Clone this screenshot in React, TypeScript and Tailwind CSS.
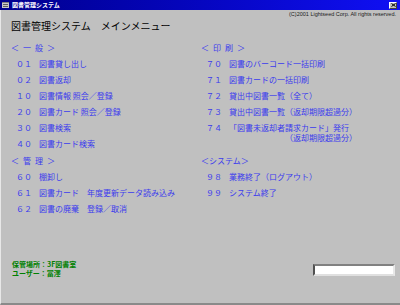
const blue = 'text-[#3a3aee]'

type Item = { no: string; label: string; sub?: string }

const general: Item[] = [
  { no: '０１', label: '図書貸し出し' },
  { no: '０２', label: '図書返却' },
  { no: '１０', label: '図書情報 照会／登録' },
  { no: '２０', label: '図書カード 照会／登録' },
  { no: '３０', label: '図書検索' },
  { no: '４０', label: '図書カード検索' },
]

const manage: Item[] = [
  { no: '６０', label: '棚卸し' },
  { no: '６１', label: '図書カード　年度更新データ読み込み' },
  { no: '６２', label: '図書の廃棄　登録／取消' },
]

const print: Item[] = [
  { no: '７０', label: '図書のバーコード一括印刷' },
  { no: '７１', label: '図書カードの一括印刷' },
  { no: '７２', label: '貸出中図書一覧（全て）' },
  { no: '７３', label: '貸出中図書一覧（返却期限超過分）' },
  { no: '７４', label: '「図書未返却者請求カード」発行', sub: '（返却期限超過分）' },
]

const system: Item[] = [
  { no: '９８', label: '業務終了（ログアウト）' },
  { no: '９９', label: 'システム終了' },
]

function Header({ text, spaced }: { text: string; spaced?: boolean }) {
  return <div className={`h-[17px] flex items-center leading-none whitespace-nowrap ${blue} ${spaced ? 'tracking-[4px]' : ''}`}>{text}</div>
}

function Row({ item }: { item: Item }) {
  if (item.sub) {
    return <div className={`h-8 ${blue}`}>
      <div className="h-4 flex items-center pl-[5px] leading-none">
        <span className="w-[23px] shrink-0">{item.no}</span>
        <span className="whitespace-nowrap">{item.label}</span>
      </div>
      <div className="mt-[-2px] pl-[84px] leading-none whitespace-nowrap">{item.sub}</div>
    </div>
  }
  return <div className={`h-4 flex items-center pl-[5px] leading-none ${blue}`}>
    <span className="w-[23px] shrink-0">{item.no}</span>
    <span className="whitespace-nowrap">{item.label}</span>
  </div>
}

export default function App() {
  return <div className="w-[400px] h-[305px] bg-[#c0c0c0] flex flex-col overflow-hidden font-['Noto_Sans_CJK_JP',sans-serif]">
    {/* title bar */}
    <div className="h-[10px] shrink-0 flex items-center bg-gradient-to-r from-[#00008e] to-[#1010f4] pl-[2px] pr-[3px]">
      <div className="w-[7px] h-[6px] bg-[#c8c8c8] border-t border-[#808080] flex flex-col justify-center gap-[1px] px-[1px]">
        <div className="h-px bg-[#606060]" />
        <div className="h-px bg-[#606060]" />
      </div>
      <span className="ml-[3px] text-[6px] font-bold text-white leading-none whitespace-nowrap">図書管理システム</span>
      <div className="ml-auto w-[8px] h-[7px] bg-[#c0c0c0] border border-t-white border-l-white border-r-[#404040] border-b-[#404040] flex items-center justify-center">
        <svg width="5" height="4" viewBox="0 0 5 4"><path d="M0.5 0.5 L4.5 3.5 M4.5 0.5 L0.5 3.5" stroke="#000" strokeWidth="1" /></svg>
      </div>
    </div>

    <div className="flex-1 flex flex-col border-l border-l-[#e8e8e8] border-b-2 border-b-[#8a8a8a]">
      <div className="h-[8px] leading-[8px] text-right pr-[4px] text-[5.5px] text-[#202020] font-['Liberation_Sans',Arial,sans-serif] whitespace-nowrap">(C)2001 Lightseed Corp. All rights reserved.</div>

      <div className="mt-[2px] pl-[10px] text-[10px] leading-[12px] text-black whitespace-nowrap">図書管理システム　メインメニュー</div>

      <div className="mt-[7px] grid grid-cols-[190px_1fr] pl-[10px] text-[8px]">
        <div className="flex flex-col">
          <Header text="＜一般＞" spaced />
          {general.map(item => <Row key={item.no} item={item} />)}
          <Header text="＜管理＞" spaced />
          {manage.map(item => <Row key={item.no} item={item} />)}
        </div>
        <div className="flex flex-col">
          <Header text="＜印刷＞" spaced />
          {print.map(item => <Row key={item.no} item={item} />)}
          <Header text="＜システム＞" />
          {system.map(item => <Row key={item.no} item={item} />)}
        </div>
      </div>

      <div className="mt-auto pb-[25px] pl-[11px] pr-[5px] flex items-start justify-between">
        <div className="text-[7px] leading-[9px] font-bold text-[#008000] whitespace-nowrap">
          <div>保管場所：3F図書室</div>
          <div>ユーザー：冨澤</div>
        </div>
        <div className="mt-[4px] w-[82px] h-[12px] bg-white border-2 border-t-[#808080] border-l-[#505050] border-r-[#e8e8e8] border-b-[#e0e0e0]" />
      </div>
    </div>
  </div>
}
